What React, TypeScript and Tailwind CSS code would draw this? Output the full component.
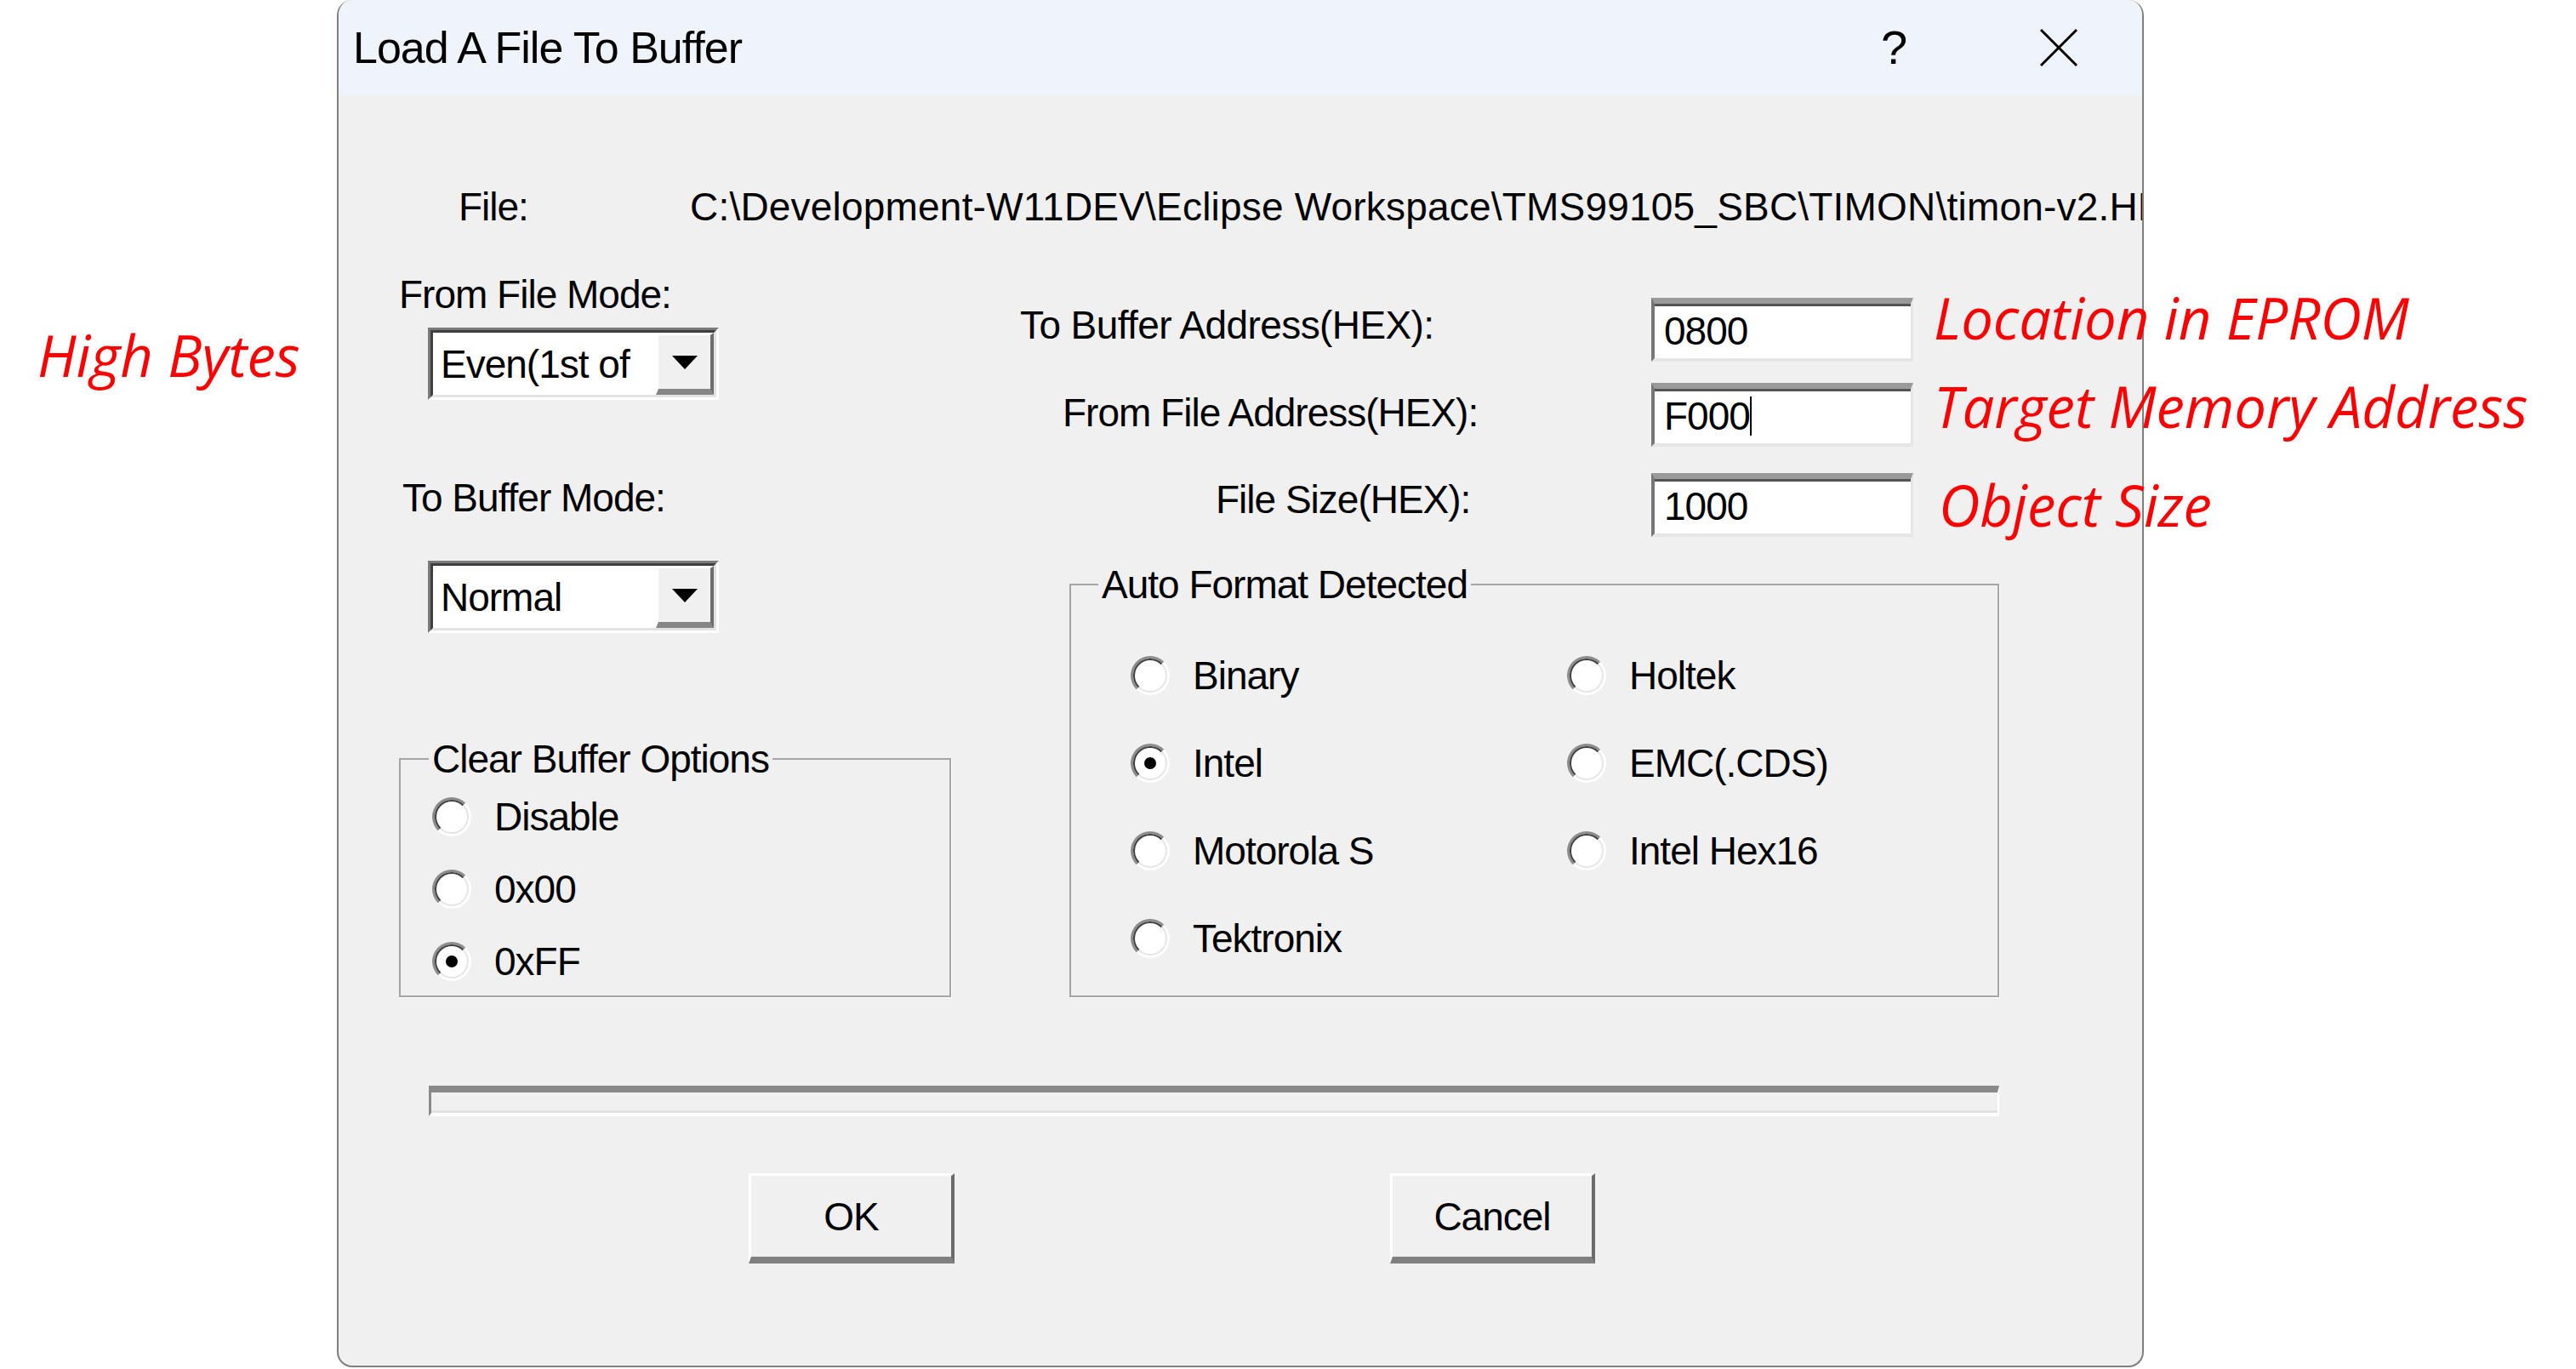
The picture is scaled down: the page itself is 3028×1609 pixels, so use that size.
import React from "react";

const B =
  "font-['Liberation_Sans',Arial,sans-serif] text-[46px] leading-[50px] text-black whitespace-nowrap";
const TR = "tracking-[-1px]";
const RED =
  "font-['Open_Sans','Noto_Sans',sans-serif] italic text-[67px] leading-[80px] text-[#ff0000] whitespace-nowrap";

function Radio({ checked }: { checked?: boolean }) {
  return (
    <span className="flex h-[46px] w-[46px] shrink-0 items-center justify-center rounded-full border-[3px] border-t-[#8c8c8c] border-l-[#8c8c8c] border-r-white border-b-white bg-white">
      <span className="flex h-full w-full items-center justify-center rounded-full border-2 border-t-[#3c3c3c] border-l-[#3c3c3c] border-r-[#e6e6e6] border-b-[#e6e6e6] bg-white">
        {checked && <span className="h-[14px] w-[14px] rounded-full bg-black" />}
      </span>
    </span>
  );
}

function RadioItem({
  label,
  checked,
  className,
}: {
  label: string;
  checked?: boolean;
  className?: string;
}) {
  return (
    <div className={`flex items-center ${className ?? ""}`}>
      <Radio checked={checked} />
      <span className={`${B} ${TR} ml-[27px]`}>{label}</span>
    </div>
  );
}

function Combo({ value }: { value: string }) {
  return (
    <div className="flex h-[85px] w-[342px] border-[3px] border-t-[#7a7a7a] border-l-[#7a7a7a] border-r-white border-b-white">
      <div className="flex flex-1 border-[3px] border-t-[#3f3f3f] border-l-[#3f3f3f] border-r-[#e3e3e3] border-b-[#e3e3e3] bg-white">
        <div className={`${B} ${TR} flex flex-1 items-center overflow-hidden pl-[9px]`}>
          {value}
        </div>
        <div className="flex w-[68px] items-center justify-center border-t-[3px] border-l-[3px] border-r-[4px] border-b-[7px] border-t-white border-l-white border-r-[#6e6e6e] border-b-[#868686] bg-[#f0f0f0]">
          <svg width="30" height="16" viewBox="0 0 30 16">
            <polygon points="0,0 30,0 15,16" fill="#000" />
          </svg>
        </div>
      </div>
    </div>
  );
}

function Edit({ value, caret }: { value: string; caret?: boolean }) {
  return (
    <div className="flex h-[75px] w-[308px] items-center border-t-[7px] border-l-[4px] border-r-[3px] border-b-[4px] border-t-[#9a9a9a] border-l-[#777777] border-r-[#e6e6e6] border-b-[#e6e6e6] bg-white pl-[11px] shadow-[inset_0_3px_0_#555555]">
      <span className={`${B} ${TR}`}>{value}</span>
      {caret && <span className="h-[46px] w-[2px] bg-black" />}
    </div>
  );
}

function Button({ label, className }: { label: string; className?: string }) {
  return (
    <div
      className={`flex h-[106px] items-center justify-center border-t-[3px] border-l-[3px] border-r-[4px] border-b-[8px] border-t-white border-l-white border-r-[#6b6b6b] border-b-[#808080] bg-[#f0f0f0] ${className ?? ""}`}
    >
      <span className={`${B} ${TR}`}>{label}</span>
    </div>
  );
}

export default function App() {
  return (
    <div className="relative flex h-[1609px] w-[3028px] overflow-hidden bg-white">
      {/* left annotation column */}
      <div className="w-[396px] shrink-0 pl-[44px] pt-[377px]">
        <span className={RED}>High Bytes</span>
      </div>

      {/* dialog */}
      <div className="flex h-[1607px] w-[2124px] shrink-0 flex-col overflow-hidden rounded-[18px] border-x-2 border-b-2 border-[#7f7f7f] bg-[#f0f0f0]">
        {/* title bar */}
        <div className="flex h-[112px] shrink-0 items-center bg-[#eff3fa] pr-[75px]">
          <span className="pl-[17px] font-['Liberation_Sans',Arial,sans-serif] text-[52px] leading-none tracking-[-1px] text-black">
            Load A File To Buffer
          </span>
          <span className="ml-auto w-[30px] text-center font-['Liberation_Sans',Arial,sans-serif] text-[56px] leading-none text-black">
            ?
          </span>
          <svg className="ml-[156px]" width="46" height="46" viewBox="0 0 46 46">
            <line x1="2" y1="2" x2="44" y2="44" stroke="#000" strokeWidth="3" />
            <line x1="44" y1="2" x2="2" y2="44" stroke="#000" strokeWidth="3" />
          </svg>
        </div>

        {/* body */}
        <div className="flex flex-1 flex-col">
          {/* file row */}
          <div className="mt-[103px] flex h-[56px] items-center pl-[141px]">
            <span className={`${B} ${TR} w-[272px] shrink-0`}>File:</span>
            <span className={`${B} tracking-[0.2px]`}>
              {"C:\\Development-W11DEV\\Eclipse Workspace\\TMS99105_SBC\\TIMON\\timon-v2.HEX"}
            </span>
          </div>

          {/* two columns */}
          <div className="mt-[29px] flex">
            {/* left */}
            <div className="ml-[71px] flex w-[681px] shrink-0 flex-col items-start">
              <span className={`${B} ${TR} mt-[21px]`}>From File Mode:</span>
              <div className="ml-[34px] mt-[14px]">
                <Combo value="Even(1st of" />
              </div>
              <span className={`${B} ${TR} ml-[4px] mt-[90px]`}>To Buffer Mode:</span>
              <div className="ml-[34px] mt-[49px]">
                <Combo value="Normal" />
              </div>
              <fieldset className="m-0 mt-[123px] h-[305px] w-[649px] border-2 border-[#a5a5a5] p-0 shadow-[1px_1px_0_#ffffff]">
                <legend className={`${B} ${TR} ml-[33px] px-[4px]`}>Clear Buffer Options</legend>
                <div className="flex flex-col pl-[37px]">
                  <RadioItem label="Disable" className="h-[85px]" />
                  <RadioItem label="0x00" className="h-[85px]" />
                  <RadioItem label="0xFF" checked className="h-[85px]" />
                </div>
              </fieldset>
            </div>

            {/* right */}
            <div className="flex w-[1200px] shrink-0 flex-col items-start">
              <div className="mt-[50px] flex h-[75px] items-center">
                <span className={`${B} tracking-[-0.6px] mb-[12px] w-[791px] pl-[49px]`}>
                  To Buffer Address(HEX):
                </span>
                <Edit value="0800" />
              </div>
              <div className="mt-[25px] flex h-[75px] items-center">
                <span className={`${B} ${TR} mb-[6px] w-[791px] pl-[99px]`}>
                  From File Address(HEX):
                </span>
                <Edit value="F000" caret />
              </div>
              <div className="mt-[31px] flex h-[75px] items-center">
                <span className={`${B} ${TR} mb-[14px] w-[791px] pl-[279px]`}>
                  File Size(HEX):
                </span>
                <Edit value="1000" />
              </div>
              <fieldset className="m-0 ml-[107px] mt-[31px] h-[510px] w-[1093px] border-2 border-[#a5a5a5] p-0 shadow-[1px_1px_0_#ffffff]">
                <legend className={`${B} ${TR} ml-[32px] px-[4px]`}>Auto Format Detected</legend>
                <div className="grid grid-cols-[513px_1fr] pl-[70px] pt-[30px]">
                  <RadioItem label="Binary" className="h-[103px]" />
                  <RadioItem label="Holtek" className="h-[103px]" />
                  <RadioItem label="Intel" checked className="h-[103px]" />
                  <RadioItem label="EMC(.CDS)" className="h-[103px]" />
                  <RadioItem label="Motorola S" className="h-[103px]" />
                  <RadioItem label="Intel Hex16" className="h-[103px]" />
                  <RadioItem label="Tektronix" className="h-[103px]" />
                </div>
              </fieldset>
            </div>
          </div>

          {/* progress bar */}
          <div className="ml-[106px] mt-[104px] h-[36px] w-[1846px] border-t-[8px] border-l-[3px] border-r-[2px] border-b-[4px] border-t-[#8a8a8a] border-l-[#8a8a8a] border-r-white border-b-white bg-[#f0f0f0] shadow-[inset_0_-3px_0_#e2e2e2]" />

          {/* buttons */}
          <div className="mt-[67px] flex">
            <Button label="OK" className="ml-[482px] w-[242px]" />
            <Button label="Cancel" className="ml-[512px] w-[241px]" />
          </div>
        </div>
      </div>

      {/* annotations overlapping the dialog edge */}
      <span className={`${RED} absolute left-[2273px] top-[333px]`}>Location in EPROM</span>
      <span className={`${RED} absolute left-[2273px] top-[437px]`}>Target Memory Address</span>
      <span className={`${RED} absolute left-[2279px] top-[553px]`}>Object Size</span>
    </div>
  );
}
